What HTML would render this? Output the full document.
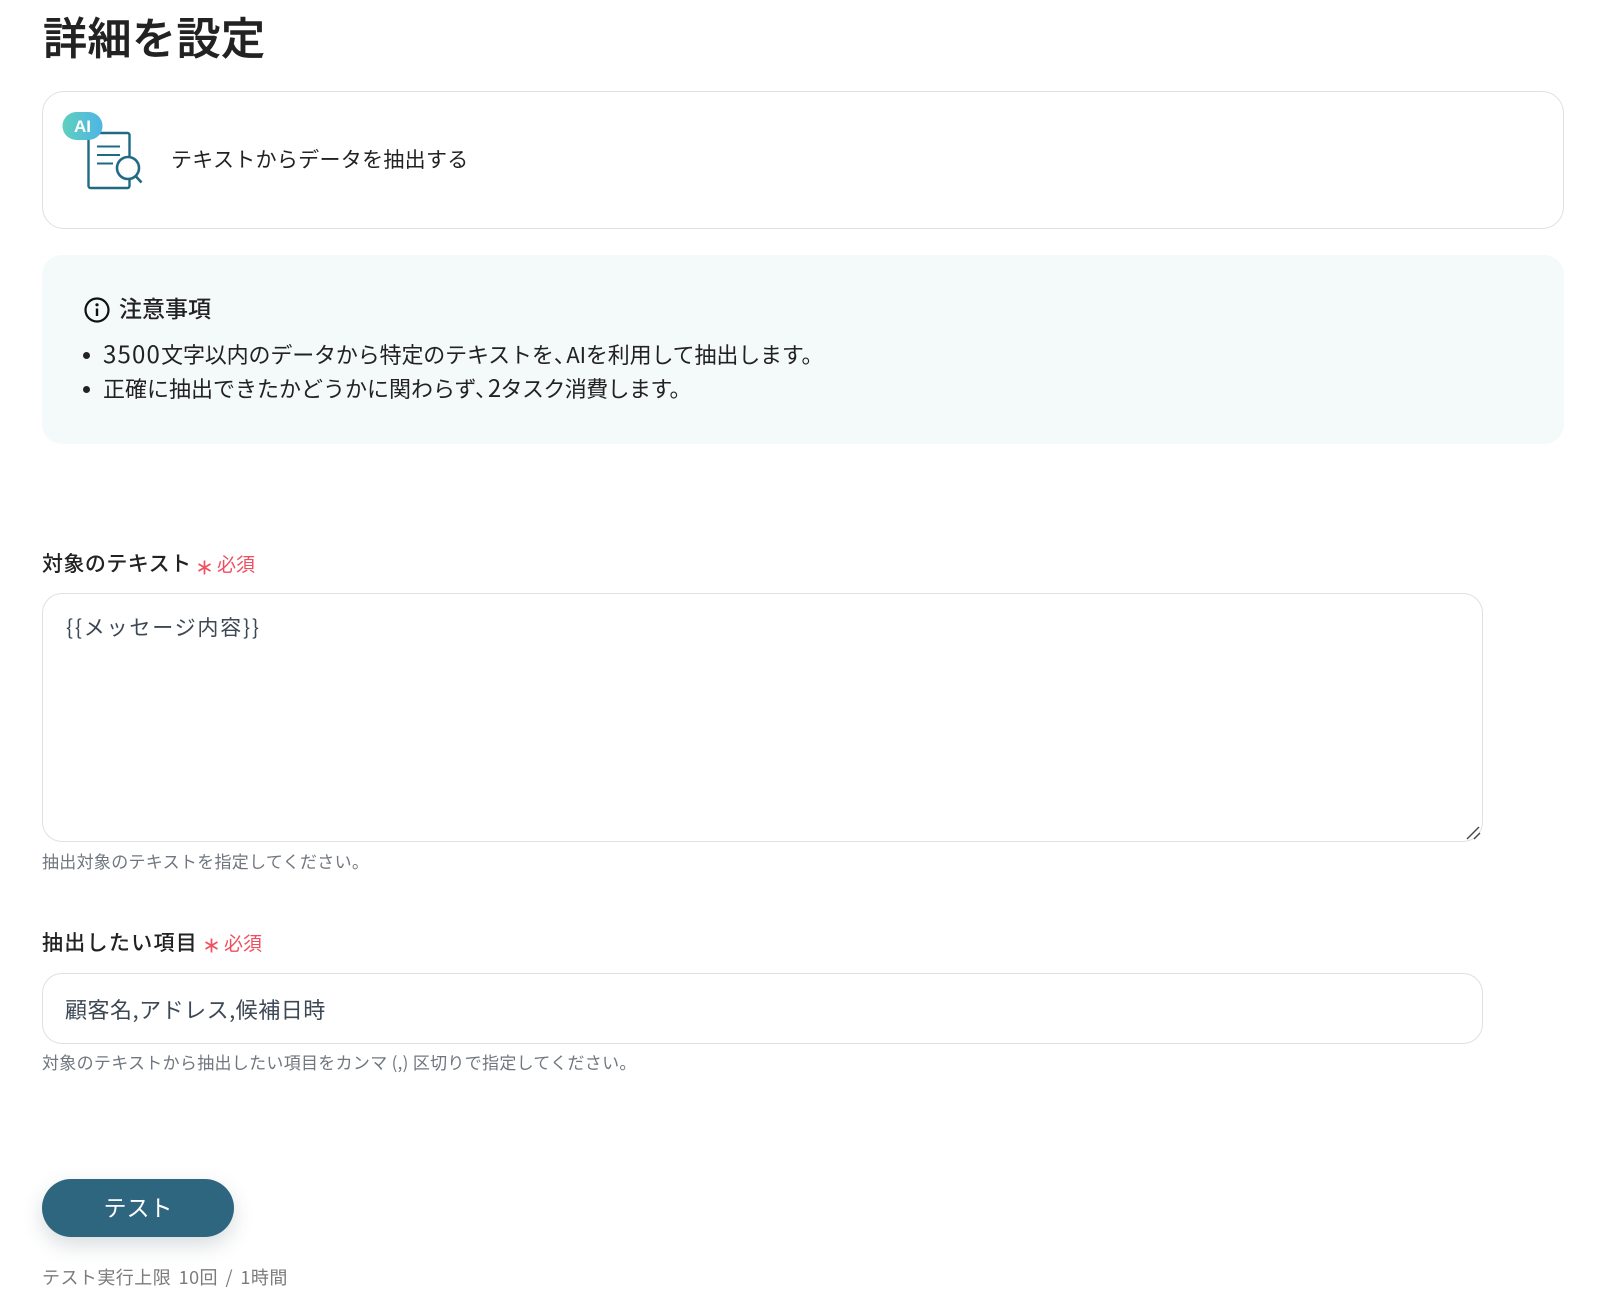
<!DOCTYPE html>
<html lang="ja"><head><meta charset="utf-8"><title>詳細を設定</title>
<style>
html,body{margin:0;padding:0;background:#fff}
body{width:1600px;height:1299px;position:relative;overflow:hidden;font-family:"Liberation Sans","Noto Sans CJK JP",sans-serif;color:#222}
.t{position:absolute;white-space:nowrap;line-height:40px;height:40px;font-family:"Noto Sans CJK JP","Liberation Sans",sans-serif}
.b{position:absolute;box-sizing:border-box;background:#fff;border:1.5px solid #e0e0e0}
.p{margin-right:-.42em}
</style></head><body>
<div class="t" style="left:43px;top:15px;font-size:44px;font-weight:500;color:#222;letter-spacing:.5px;-webkit-text-stroke:.5px #222">詳細を設定</div>

<div class="b" style="left:42px;top:91px;width:1522px;height:138px;border-radius:22px"></div>
<svg style="position:absolute;left:60px;top:108px" width="90" height="84" viewBox="60 108 90 84">
<defs><linearGradient id="g" x1="0" x2="1"><stop offset="0" stop-color="#5fd0bd"/><stop offset="1" stop-color="#4fb4e6"/></linearGradient></defs>
<rect x="88.500" y="133" width="41" height="55" rx="2" fill="#fff" stroke="#1f6a85" stroke-width="2.400"/>
<path d="M97 146.500H120M97 155H120M97 163.500H113" stroke="#1f6a85" stroke-width="2" fill="none"/>
<circle cx="128" cy="168" r="11" fill="#fff" stroke="#1f6a85" stroke-width="2.600"/>
<path d="M136 176.500L141.500 182.500" stroke="#1f6a85" stroke-width="2.600" fill="none"/>
<rect x="62.500" y="112" width="40" height="28" rx="14" fill="url(#g)"/>
<text x="82.500" y="132" text-anchor="middle" font-family="Liberation Sans" font-size="17" font-weight="700" fill="#fff">AI</text>
</svg>
<div class="t" style="left:171px;top:139px;font-size:21px;color:#222;letter-spacing:.3px">テキストからデータを抽出する</div>

<div style="position:absolute;left:42px;top:255px;width:1522px;height:189px;background:#f4f9f9;border-radius:20px"></div>
<svg style="position:absolute;left:83px;top:296px" width="28" height="28" viewBox="0 0 28 28"><circle cx="14" cy="14" r="11.500" fill="none" stroke="#111" stroke-width="2.200"/><circle cx="14" cy="8.800" r="1.600" fill="#111"/><path d="M14 12.500V20" stroke="#111" stroke-width="2.400"/></svg>
<div class="t" style="left:119px;top:287px;font-size:23px;font-weight:500;color:#222">注意事項</div>
<div style="position:absolute;left:83px;top:352px;width:7px;height:7px;border-radius:50%;background:#222"></div>
<div class="t" style="left:103px;top:333px;font-size:22px;color:#222;letter-spacing:-.15px"><span style="font-size:24px;letter-spacing:1.200px">3500</span>文字以内のデータから特定のテキストを<span class="p">、</span>AIを利用して抽出します。</div>
<div style="position:absolute;left:83px;top:386px;width:7px;height:7px;border-radius:50%;background:#222"></div>
<div class="t" style="left:103px;top:367px;font-size:22px;color:#222">正確に抽出できたかどうかに関わらず<span class="p">、</span><span style="letter-spacing:-.6px"><span style="font-size:24px">2</span>タスク消費します。</span></div>

<div class="t" style="left:42px;top:543px;font-size:21px;font-weight:500;color:#222;letter-spacing:.45px">対象のテキスト</div>
<svg style="position:absolute;left:197px;top:560px" width="15" height="15" viewBox="0 0 15 15"><path d="M7.500 .5V14.500M1.500 4L13.500 11M13.500 4L1.500 11" stroke="#ef4f5f" stroke-width="1.700" fill="none"/></svg>
<div class="t" style="left:217px;top:544px;font-size:19px;color:#ef4f5f">必須</div>
<div class="b" style="left:42px;top:593px;width:1441px;height:249px;border-radius:20px"></div>
<div class="t" style="left:66px;top:607px;font-size:21px;color:#3d4854;letter-spacing:1.800px">{{メッセージ内容}}</div>
<svg style="position:absolute;left:1465px;top:824px" width="18" height="18"><path d="M2 15L14 3M9 15L15 9" stroke="#444" stroke-width="1.400" fill="none"/></svg>
<div class="t" style="left:42px;top:841px;font-size:17px;color:#70777f;letter-spacing:.3px">抽出対象のテキストを指定してください。</div>

<div class="t" style="left:42px;top:922px;font-size:21px;font-weight:500;color:#222;letter-spacing:1.300px">抽出したい項目</div>
<svg style="position:absolute;left:204px;top:938px" width="15" height="15" viewBox="0 0 15 15"><path d="M7.500 .5V14.500M1.500 4L13.500 11M13.500 4L1.500 11" stroke="#ef4f5f" stroke-width="1.700" fill="none"/></svg>
<div class="t" style="left:224px;top:923px;font-size:19px;color:#ef4f5f">必須</div>
<div class="b" style="left:42px;top:973px;width:1441px;height:71px;border-radius:20px"></div>
<div class="t" style="left:65px;top:989px;font-size:22px;color:#3d4854;letter-spacing:.5px">顧客名,アドレス,候補日時</div>
<div class="t" style="left:42px;top:1042px;font-size:17px;color:#70777f;letter-spacing:.3px">対象のテキストから抽出したい項目をカンマ (,) 区切りで指定してください。</div>

<div style="position:absolute;left:42px;top:1179px;width:192px;height:58px;border-radius:29px;background:#2e6680;box-shadow:0 8px 20px rgba(40,60,80,.18)"></div>
<div class="t" style="left:42px;top:1186px;width:192px;text-align:center;font-size:23px;color:#fff">テスト</div>
<div class="t" style="left:42px;top:1257px;font-size:18px;color:#7b7b7b;word-spacing:3px;letter-spacing:.45px">テスト実行上限 10回 / 1時間</div>
</body></html>
